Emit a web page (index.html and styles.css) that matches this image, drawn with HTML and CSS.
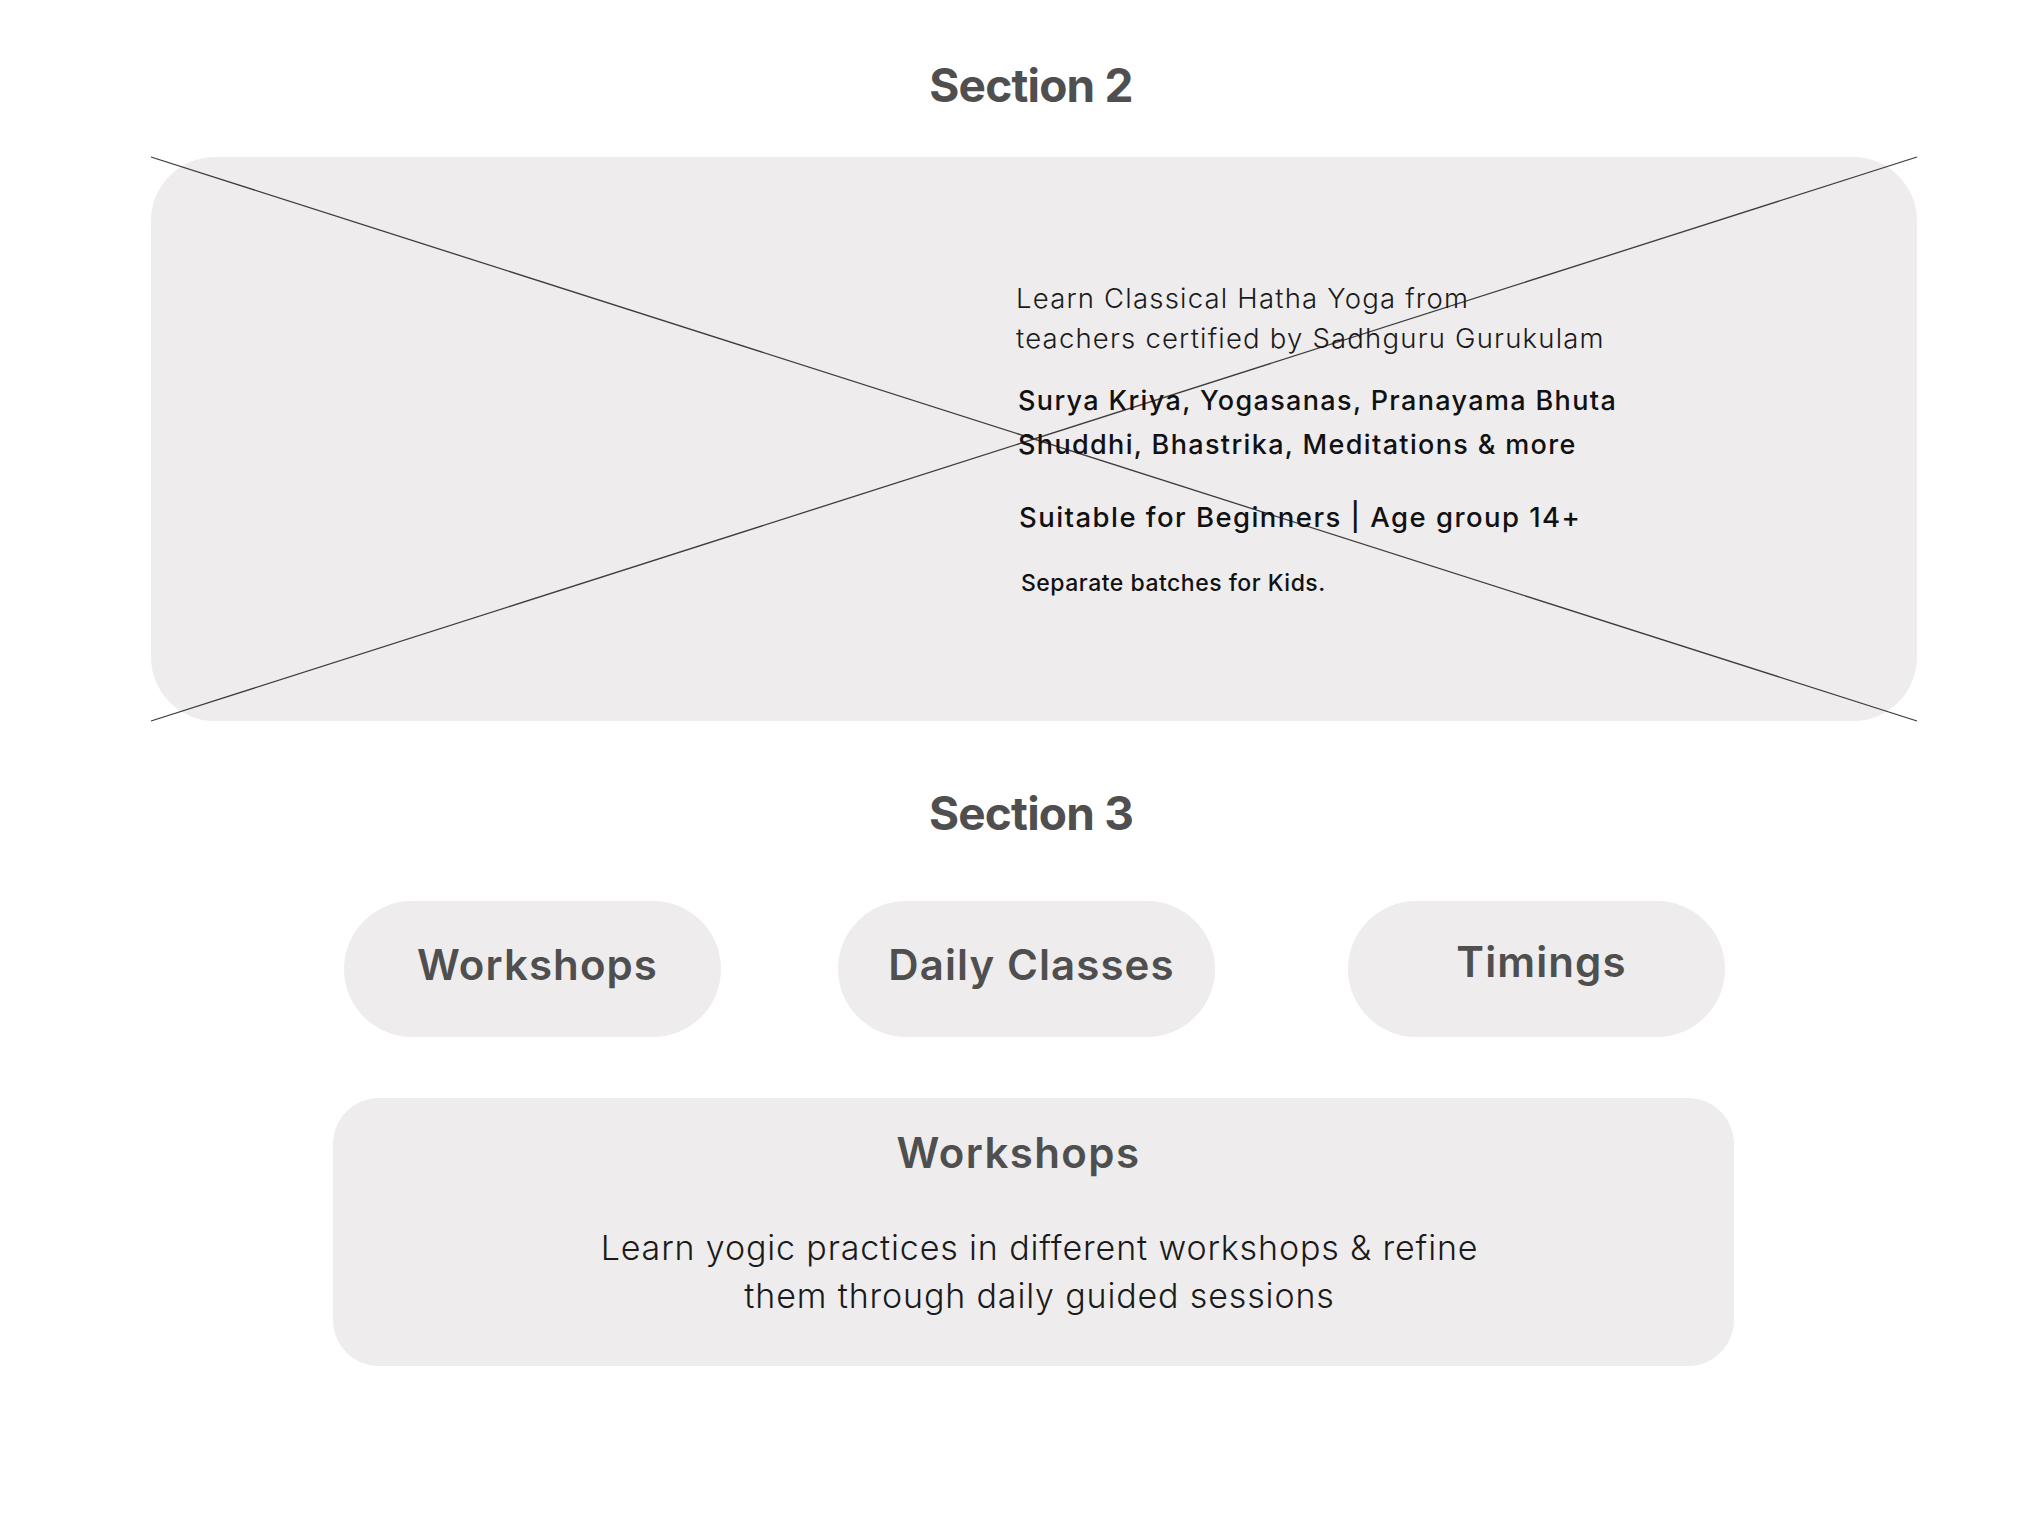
FILE: index.html
```html
<!DOCTYPE html>
<html lang="en">
<head>
<meta charset="utf-8">
<title>Sections</title>
<link rel="stylesheet" href="styles.css">
</head>
<body>
<main class="page">
  <h2 class="section-title">Section 2</h2>

  <section class="hero">
    <svg class="hero-cross" aria-hidden="true">
      <line x1="0" y1="0" x2="100%" y2="100%"></line>
      <line x1="0" y1="100%" x2="100%" y2="0"></line>
    </svg>
    <div class="hero-text">
      <p class="lead">Learn Classical Hatha Yoga from<br>teachers certified by Sadhguru Gurukulam</p>
      <p class="practices">Surya Kriya, Yogasanas, Pranayama Bhuta<br>Shuddhi, Bhastrika, Meditations &amp; more</p>
      <p class="suitable">Suitable for Beginners | Age group 14+</p>
      <p class="kids">Separate batches for Kids.</p>
    </div>
  </section>

  <h2 class="section-title section-title-3">Section 3</h2>

  <nav class="pills">
    <div class="pill">Workshops</div>
    <div class="pill">Daily Classes</div>
    <div class="pill pill-timings">Timings</div>
  </nav>

  <section class="info">
    <h3 class="info-title">Workshops</h3>
    <p class="info-body">Learn yogic practices in different workshops &amp; refine<br>them through daily guided sessions</p>
  </section>
</main>
</body>
</html>
```

FILE: styles.css
```css
html, body {
  margin: 0;
  padding: 0;
  background: #ffffff;
}

body {
  font-family: "Inter", "Noto Sans", "DejaVu Sans", sans-serif;
  color: #111111;
}

.page {
  width: 1766px;
  margin-left: 151px;
  padding-top: 57px;
  padding-bottom: 40px;
}

.section-title {
  margin: 0;
  font-size: 46px;
  line-height: 56px;
  font-weight: 700;
  letter-spacing: -0.8px;
  color: #4f4f4f;
  text-align: center;
  padding-right: 6px;
}

.section-title-3 {
  margin-top: 64px;
}

.hero {
  position: relative;
  margin-top: 44px;
  height: 564px;
  box-sizing: border-box;
  padding: 121px 0 0 865px;
  background: #eeeced;
  border-radius: 64px;
}

.hero-cross {
  position: absolute;
  left: 0;
  top: 0;
  width: 100%;
  height: 100%;
  overflow: visible;
  pointer-events: none;
}

.hero-cross line {
  stroke: #3c3c3c;
  stroke-width: 1.3;
}

.hero-text {
  position: relative;
  white-space: nowrap;
}

.hero-text p {
  margin: 0;
}

.lead {
  font-size: 27.5px;
  line-height: 40px;
  font-weight: 300;
  letter-spacing: 1.2px;
  color: #1a1a1a;
}

.hero-text .practices {
  margin-top: 21px;
  margin-left: 2px;
  font-size: 27px;
  line-height: 44px;
  font-weight: 500;
  letter-spacing: 1.35px;
}

.hero-text .suitable {
  margin-top: 28px;
  margin-left: 3px;
  font-size: 27.5px;
  line-height: 44px;
  font-weight: 500;
  letter-spacing: 1.45px;
}

.hero-text .kids {
  margin-top: 28px;
  margin-left: 5px;
  font-size: 23px;
  line-height: 32px;
  font-weight: 500;
  letter-spacing: 0.5px;
}

.pills {
  display: flex;
  margin-top: 60px;
  padding-left: 193px;
}

.pill {
  width: 377px;
  height: 136px;
  box-sizing: border-box;
  padding: 0 0 8px 10px;
  border-radius: 68px;
  background: #eeeced;
  text-align: center;
  font-size: 42px;
  line-height: 128px;
  font-weight: 600;
  letter-spacing: 1.1px;
  color: #4f4f4f;
}

.pill + .pill {
  margin-left: 117px;
}

.pill.pill-timings {
  margin-left: 133px;
  padding-bottom: 14px;
  line-height: 122px;
}

.info {
  margin-top: 61px;
  margin-left: 182px;
  width: 1401px;
  height: 268px;
  box-sizing: border-box;
  padding-top: 29px;
  border-radius: 46px;
  background: #eeeced;
  text-align: center;
}

.info-title {
  margin: 0;
  padding-right: 30px;
  font-size: 42px;
  line-height: 52px;
  font-weight: 600;
  letter-spacing: 1.4px;
  color: #4f4f4f;
}

.info-body {
  margin: 45px 0 0;
  padding-left: 12px;
  font-size: 34px;
  line-height: 48px;
  font-weight: 300;
  letter-spacing: 0.85px;
  color: #1a1a1a;
}
```
